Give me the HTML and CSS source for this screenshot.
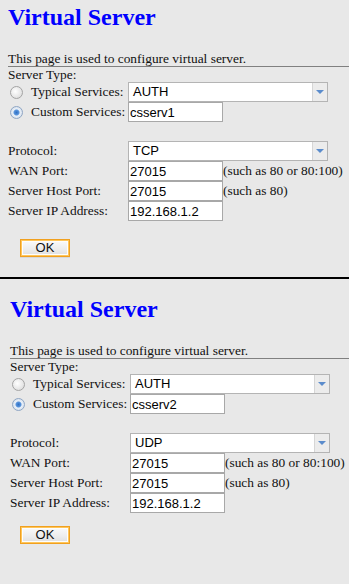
FILE: index.html
```html
<!DOCTYPE html>
<html lang="en">
<head>
  <meta charset="UTF-8" />
  <title>Virtual Server</title>
  <link rel="stylesheet" href="styles.css">
</head>
<body>

<!-- first capture: TCP -->
<div class="panel panel-first">
  <h1 class="title">Virtual Server</h1>
  <p class="desc">This page is used to configure virtual server.</p>
  <div class="type-label">Server Type:</div>

  <div class="row">
    <label class="radio-label"><span class="radio"></span>Typical Services:</label>
    <div class="select"><span class="select-text">AUTH</span><span class="arrow"></span></div>
  </div>
  <div class="row">
    <label class="radio-label"><span class="radio checked"></span>Custom Services:</label>
    <input class="field" type="text" value="csserv1">
  </div>

  <div class="spacer"></div>

  <div class="row">
    <span class="label">Protocol:</span>
    <div class="select"><span class="select-text">TCP</span><span class="arrow"></span></div>
  </div>
  <div class="row">
    <span class="label">WAN Port:</span>
    <input class="field" type="text" value="27015">
    <span class="hint">(such as 80 or 80:100)</span>
  </div>
  <div class="row">
    <span class="label">Server Host Port:</span>
    <input class="field" type="text" value="27015">
    <span class="hint">(such as 80)</span>
  </div>
  <div class="row">
    <span class="label">Server IP Address:</span>
    <input class="field" type="text" value="192.168.1.2">
  </div>

  <div class="actions"><button class="btn-ok">OK</button></div>
</div>

<!-- second capture: UDP -->
<div class="panel panel-second">
  <h1 class="title">Virtual Server</h1>
  <p class="desc">This page is used to configure virtual server.</p>
  <div class="type-label">Server Type:</div>

  <div class="row">
    <label class="radio-label"><span class="radio"></span>Typical Services:</label>
    <div class="select"><span class="select-text">AUTH</span><span class="arrow"></span></div>
  </div>
  <div class="row">
    <label class="radio-label"><span class="radio checked"></span>Custom Services:</label>
    <input class="field" type="text" value="csserv2">
  </div>

  <div class="spacer"></div>

  <div class="row">
    <span class="label">Protocol:</span>
    <div class="select"><span class="select-text">UDP</span><span class="arrow"></span></div>
  </div>
  <div class="row">
    <span class="label">WAN Port:</span>
    <input class="field" type="text" value="27015">
    <span class="hint">(such as 80 or 80:100)</span>
  </div>
  <div class="row">
    <span class="label">Server Host Port:</span>
    <input class="field" type="text" value="27015">
    <span class="hint">(such as 80)</span>
  </div>
  <div class="row">
    <span class="label">Server IP Address:</span>
    <input class="field" type="text" value="192.168.1.2">
  </div>

  <div class="actions"><button class="btn-ok">OK</button></div>
</div>

</body>
</html>
```

FILE: styles.css
```css
* { margin: 0; padding: 0; box-sizing: border-box; }

body {
  background: #e8e8e8;
  color: #111;
  font-family: "Liberation Serif", "Times New Roman", serif;
  font-size: 13.4px;
  line-height: 15px;
}

.panel { padding-left: 8px; }

.panel-first {
  padding-bottom: 20px;
  border-bottom: 2px solid #000;
}

.panel-second { padding-left: 10px; }

.title {
  font-size: 24px;
  line-height: 28px;
  font-weight: bold;
  color: #0000ff;
  margin: 3px 0 20px;
}

.panel-second .title { margin-top: 16px; }

.desc {
  border-bottom: 1px solid #808080;
}

.type-label { height: 15px; }

.row {
  display: flex;
  align-items: center;
  height: 20px;
  line-height: 20px;
}

.spacer { height: 19px; }

.label,
.radio-label {
  width: 120px;
  flex-shrink: 0;
}

.radio-label {
  display: flex;
  align-items: center;
  gap: 8px;
  padding-left: 2px;
}

.radio {
  width: 13px;
  height: 13px;
  border-radius: 50%;
  border: 1px solid #a4a4a4;
  background: radial-gradient(circle at 40% 40%, #ffffff, #d6d6d6);
}

.radio.checked {
  border-color: #8fa6c4;
  background: radial-gradient(circle, #2d6fc4 0, #5a95dc 2.5px, #e9f0f8 3.5px, #c9d4e2 100%);
}

.select {
  display: flex;
  width: 200px;
  height: 20px;
  background: #fff;
  border: 1px solid #b4b4b4;
  font-family: "Liberation Sans", Arial, sans-serif;
  font-size: 13px;
  line-height: 18px;
  color: #000;
}

.select-text { padding-left: 4px; }

.arrow {
  margin-left: auto;
  width: 15px;
  background: #ececec;
  border-left: 1px solid #d6d6d6;
  display: flex;
  align-items: center;
  justify-content: center;
}

.arrow::after {
  content: "";
  border-left: 4px solid transparent;
  border-right: 4px solid transparent;
  border-top: 4px solid #5b8ccc;
}

.field {
  width: 95px;
  height: 20px;
  background: #fff;
  border: 1px solid #a8a8a8;
  padding: 0 1px;
  font-family: "Liberation Sans", Arial, sans-serif;
  font-size: 13px;
  color: #000;
  outline: none;
}

.hint { white-space: nowrap; }

.actions {
  margin-top: 18px;
  padding-left: 12px;
  height: 18px;
}

.panel-second .actions {
  margin-top: 13px;
  padding-left: 10px;
}

.btn-ok {
  width: 50px;
  height: 18px;
  border: 1px solid #f0a020;
  box-shadow: inset 0 0 0 1px #ffc65a, inset 0 0 0 2px #fdfdfd, 0 1px 0 #d8d8d8;
  background: linear-gradient(#fbfbfb, #ececec 60%, #dedede);
  font-family: "Liberation Sans", Arial, sans-serif;
  font-size: 13px;
  line-height: 14px;
  color: #111;
  display: block;
}
```
